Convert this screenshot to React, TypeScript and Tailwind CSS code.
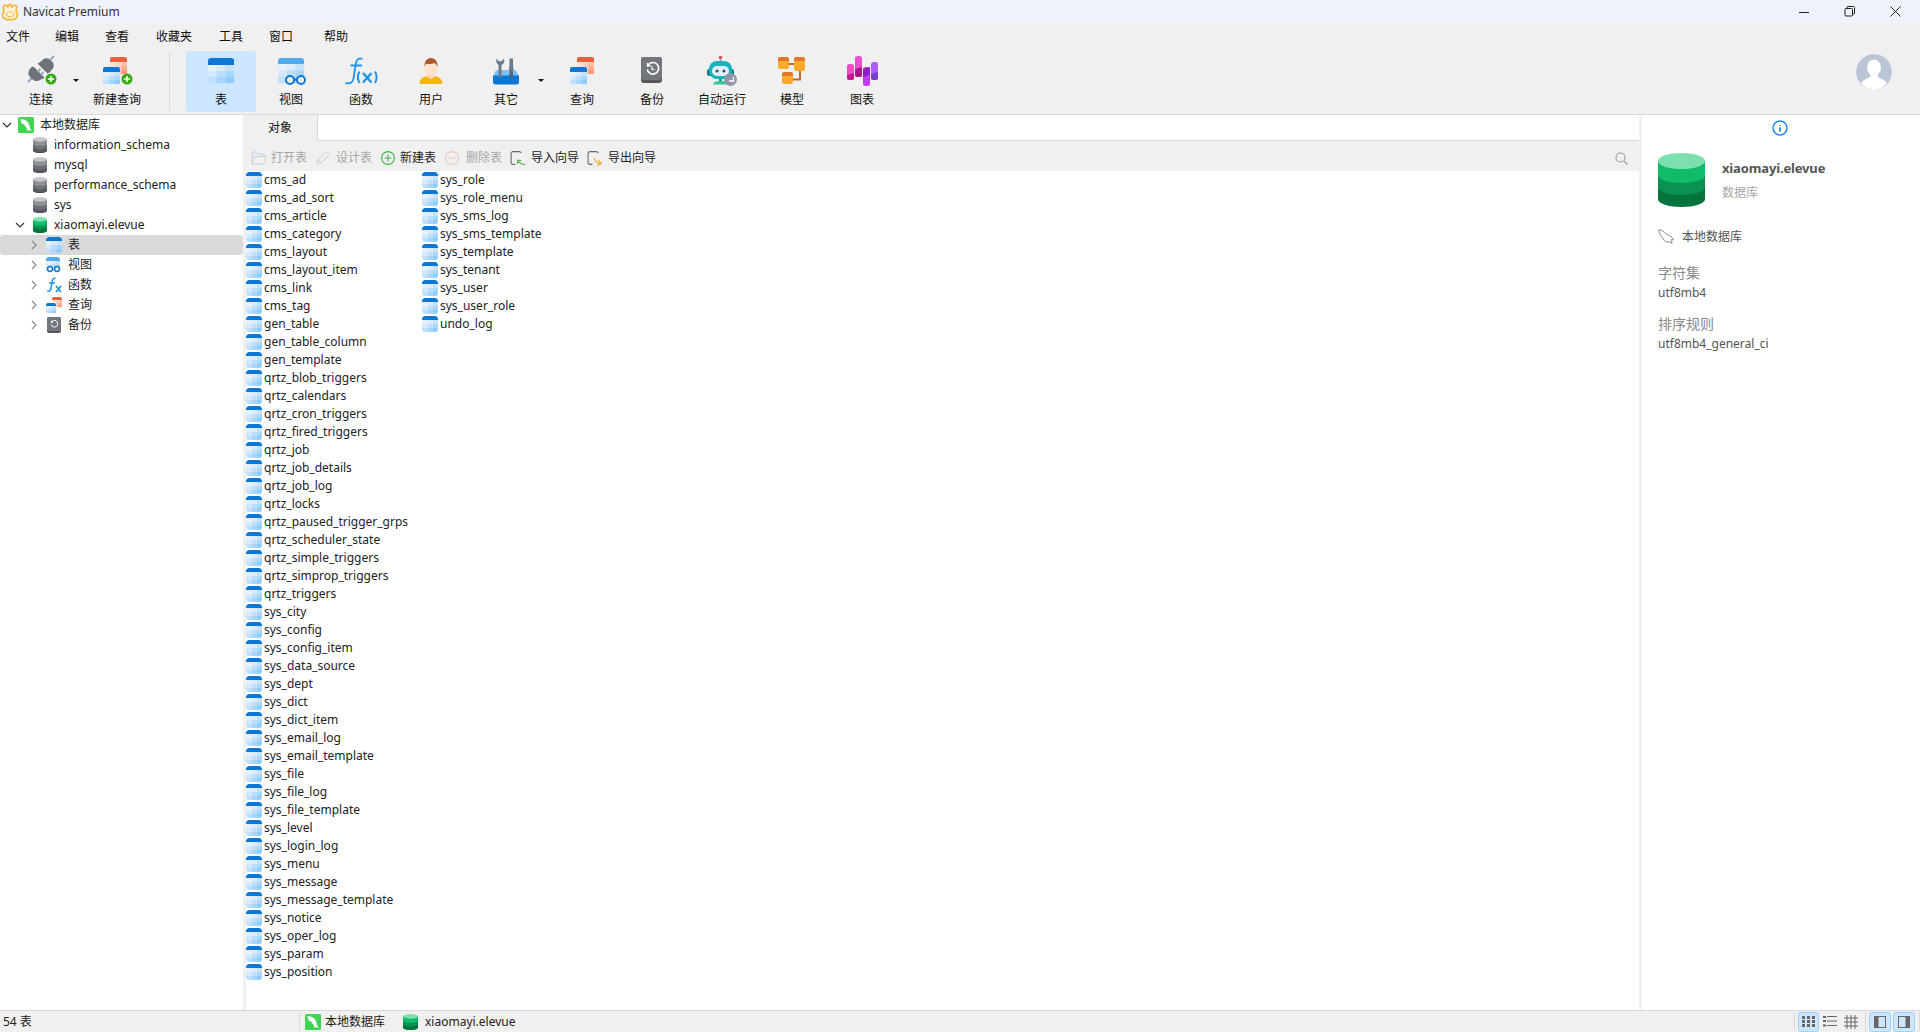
import React from "react";

const col1 = ["cms_ad","cms_ad_sort","cms_article","cms_category","cms_layout","cms_layout_item","cms_link","cms_tag","gen_table","gen_table_column","gen_template","qrtz_blob_triggers","qrtz_calendars","qrtz_cron_triggers","qrtz_fired_triggers","qrtz_job","qrtz_job_details","qrtz_job_log","qrtz_locks","qrtz_paused_trigger_grps","qrtz_scheduler_state","qrtz_simple_triggers","qrtz_simprop_triggers","qrtz_triggers","sys_city","sys_config","sys_config_item","sys_data_source","sys_dept","sys_dict","sys_dict_item","sys_email_log","sys_email_template","sys_file","sys_file_log","sys_file_template","sys_level","sys_login_log","sys_menu","sys_message","sys_message_template","sys_notice","sys_oper_log","sys_param","sys_position"];
const col2 = ["sys_role","sys_role_menu","sys_sms_log","sys_sms_template","sys_template","sys_tenant","sys_user","sys_user_role","undo_log"];

const blues = ["#e6f1fc","#d9ebfc","#c6e2fc","#d4e9fc","#bcdefc","#a9d6fc","#c2e0fd","#a6d5fd","#8fccfd"];
const reds = ["#fde0d6","#fdd2c3","#fcc0ac","#fdd0bf","#fcbda6","#fbab92","#fcc1ab","#fba98f","#fa9a7e"];

function Grid({ x, y, w, h, top, c, head, r = 2 }: { x: number; y: number; w: number; h: number; top: number; c: string[]; head: string; r?: number }) {
  const cw = w / 3;
  const ch = (h - top) / 3;
  return (
    <g>
      {c.map((col, i) => (
        <rect key={i} x={x + (i % 3) * cw} y={y + top + Math.floor(i / 3) * ch} width={cw + 0.1} height={ch + 0.1} fill={col} />
      ))}
      <path d={`M${x} ${y + top}V${y + r}a${r} ${r} 0 0 1 ${r} -${r}H${x + w - r}a${r} ${r} 0 0 1 ${r} ${r}V${y + top}Z`} fill={head} />
    </g>
  );
}

function TableIcon({ s = 16 }: { s?: number }) {
  return (
    <svg width={s} height={s} viewBox="0 0 16 16" className="shrink-0 rounded-[3px]">
      <Grid x={0} y={0} w={16} h={16} top={4} c={blues} head="#0a78d4" r={3} />
    </svg>
  );
}

function Dolphin({ s = 16 }: { s?: number }) {
  return (
    <svg width={s} height={s} viewBox="0 0 16 16" className="shrink-0">
      <rect width="16" height="16" rx="1.5" fill="#3fd54f" />
      <path d="M2 2.500C5 1.800 8 3 10 5.500c1.300 1.700 1.600 3.600 2 5.500l1.800 3.200-3.200-1.400-1 1.700-.6-2.600C8 9.500 6 8 4.800 6.600L3.400 7.200 3.600 5.400 2 2.500Z" fill="#fff" />
    </svg>
  );
}

function DolphinOutline() {
  return (
    <svg width="16" height="16" viewBox="0 0 16 16" fill="none" stroke="#8a8a8a" strokeWidth="1" className="shrink-0">
      <path d="M1 .8C4 1 6.500 3 8 5c1.500.8 3.600 1.600 6 3.400.8.700 1.200 1.600 1.200 2.400l-1.600-.4.4 3.800-3-1.400c-2.500.6-4.300-.2-5-1.800C5 9.600 4 8 2.600 6.200 1.500 4.800.8 2.500 1 .8Z" />
    </svg>
  );
}

function DbIcon({ w = 14, h = 16, color = "green" }: { w?: number; h?: number; color?: "green" | "gray" }) {
  const p = color === "green"
    ? ["#7be0ae", "#10bc69", "#0b9150", "#04733c"]
    : ["#c4c6c9", "#8d9095", "#6e7176", "#55585d"];
  return (
    <svg width={w} height={h} viewBox="0 0 47 54" preserveAspectRatio="none" className="shrink-0">
      <path d="M0 46c0 4.500 10.500 8 23.500 8S47 50.500 47 46V32H0Z" fill={p[3]} />
      <path d="M0 34c0 4.500 10.500 8 23.500 8S47 38.500 47 34V20H0Z" fill={p[2]} />
      <path d="M0 8v14c0 4.500 10.500 8 23.500 8S47 26.500 47 22V8Z" fill={p[1]} />
      <ellipse cx="23.500" cy="8" rx="23.500" ry="8" fill={p[0]} />
    </svg>
  );
}

function PlusBadge({ cx, cy, r }: { cx: number; cy: number; r: number }) {
  return (
    <g>
      <circle cx={cx} cy={cy} r={r} fill="#3aaa12" />
      <path d={`M${cx - r * 0.55} ${cy}H${cx + r * 0.55}M${cx} ${cy - r * 0.55}V${cy + r * 0.55}`} stroke="#fff" strokeWidth="1.6" />
    </g>
  );
}

function Icon34({ children }: { children: React.ReactNode }) {
  return <svg width="34" height="34" viewBox="0 0 34 34" className="shrink-0" fill="none">{children}</svg>;
}

const IconConnect = () => (
  <Icon34>
    <path d="M30 3l-3.500 3.500M4 29l4-4" stroke="#8fa6bf" strokeWidth="2" />
    <path d="M14 11l9.500 9.500a5 5 0 0 0 2-1l3-3.500a6 6 0 0 0 0-7l-2.500-2.500a6 6 0 0 0-7 0l-3.500 3a5 5 0 0 0-2 1.500Z" fill="#6e7279" />
    <path d="M9.500 13.500l11 11a5 5 0 0 1-2.500 1.500l-3 1.500a6 6 0 0 1-6.500-1l-2.500-2.500a6 6 0 0 1-1-6.500l1.500-2.500a5 5 0 0 1 3-1.500Z" fill="#6e7279" />
    <path d="M13.500 19l3-3M16.500 22l3-3" stroke="#8fa6bf" strokeWidth="1.800" />
    <PlusBadge cx={27} cy={26} r={5.500} />
  </Icon34>
);
const IconNewQuery = () => (
  <Icon34>
    <Grid x={10} y={4} w={17} h={17} top={5} c={reds} head="#e9603f" />
    <rect x={2.500} y={13.500} width={18} height={18} rx={2} fill="#f0f0f0" />
    <Grid x={3} y={14} w={17} h={17} top={5} c={blues} head="#0a78d4" />
    <PlusBadge cx={27} cy={26} r={5.500} />
  </Icon34>
);
const IconTable = () => (
  <Icon34>
    <Grid x={4} y={5} w={26} h={25} top={7} c={blues} head="#0a78d4" r={3} />
  </Icon34>
);
const IconView = () => (
  <Icon34>
    <Grid x={4} y={5} w={26} h={25} top={6} c={blues} head="#52abec" r={3} />
    <circle cx={16} cy={27} r={4} fill="#f0f0f0" stroke="#0a78d4" strokeWidth="2" />
    <circle cx={27} cy={27} r={4} fill="#f0f0f0" stroke="#0a78d4" strokeWidth="2" />
    <path d="M20 26.500h3" stroke="#0a78d4" strokeWidth="2" />
  </Icon34>
);
const IconFunc = () => (
  <Icon34>
    <path d="M18.500 6c-3.500-1.400-5.800 0-6.400 3.500L9.500 25.500C9 29.500 6 31 1.500 30M6.500 12.500H18" stroke="#1f93ea" strokeWidth="1.800" />
    <path d="M15.500 18.500c-2 3.500-2 8 0 11.500M31 18.500c2 3.500 2 8 0 11.500" stroke="#1f93ea" strokeWidth="2" />
    <path d="M19 20l8.500 9.500M27.500 20L19 29.500" stroke="#1f93ea" strokeWidth="2.400" />
  </Icon34>
);
const IconUser = () => (
  <Icon34>
    <path d="M5.500 31c0-5 3-6.500 7-8l4.500 2.500 4.500-2.500c4 1.500 7 3 7 8Z" fill="#fbb40b" />
    <path d="M13.500 20h7v4l-3.500 2.500-3.500-2.500Z" fill="#f7d9bd" />
    <ellipse cx={17} cy={15} rx={6.500} ry={7.500} fill="#fbe3cc" />
    <path d="M10.500 14c-.5-6 3-9 6.500-9s7 3 6.500 9c-1-2.500-2-3.500-3.500-4-2 1.200-6 1.500-7.500.6-1 .8-1.600 2-2 3.400Z" fill="#a85a28" />
  </Icon34>
);
const IconOther = () => (
  <Icon34>
    <path d="M4 24l2-5a3 3 0 0 1 3-2h16a3 3 0 0 1 3 2l2 5Z" fill="#7cc0f5" />
    <path d="M4 22.500h26V29a2.500 2.500 0 0 1-2.500 2.500h-21A2.500 2.500 0 0 1 4 29Z" fill="#0a78d4" />
    <path d="M9.500 12v12h3V12c1.800-.8 2.800-2.400 2.800-4.200 0-.8-.2-1.500-.5-2.100l-2 2.500h-3.100l-2-2.500c-.3.600-.5 1.300-.5 2.100 0 1.800 1 3.400 2.800 4.200Z" fill="#6a7a8c" />
    <path d="M20.500 11V5.500h3.500V11l.6 7h-4.700Z" fill="#6a7a8c" />
    <path d="M20 24l.900-6h2.700l.900 6Z" fill="#566373" />
  </Icon34>
);
const IconQuery = () => (
  <Icon34>
    <Grid x={12} y={4} w={17} h={17} top={5} c={reds} head="#e9603f" />
    <rect x={4.500} y={13.500} width={18} height={18} rx={2} fill="#f0f0f0" />
    <Grid x={5} y={14} w={17} h={17} top={5} c={blues} head="#0a78d4" />
  </Icon34>
);
const IconBackup = () => (
  <Icon34>
    <rect x={6} y={4} width={21} height={26} rx={3} fill="#55585d" />
    <rect x={6} y={4} width={21} height={23} rx={3} fill="#73767c" />
    <path d="M13.500 11.500a5.800 5.800 0 1 1-1.300 5" stroke="#fff" strokeWidth="1.600" />
    <path d="M11.500 9.500l.6 4.600 4.300-1Z" fill="#fff" />
    <path d="M17 13v3.500h2.500" stroke="#fff" strokeWidth="1.100" />
  </Icon34>
);
const IconRobot = () => (
  <Icon34>
    <circle cx={15.500} cy={4.500} r={1.800} fill="#f0455a" />
    <path d="M15.500 5v4" stroke="#7f8f9f" strokeWidth="1.200" />
    <path d="M4 16h2v7H4a2 2 0 0 1-2-2v-3a2 2 0 0 1 2-2ZM25 16h2a2 2 0 0 1 2 2v3a2 2 0 0 1-2 2h-2Z" fill="#0f7d7c" />
    <rect x={4} y={8} width={23} height={18} rx={8} fill="#1bb3bb" />
    <rect x={7} y={13} width={17} height={10} rx={5} fill="#e2f0fa" />
    <circle cx={12} cy={18} r={1.500} fill="#264b7c" />
    <circle cx={19} cy={18} r={1.500} fill="#264b7c" />
    <path d="M15.500 26v3" stroke="#1e9d84" strokeWidth="3" />
    <path d="M8 31.500c0-2.500 3-3.500 7.500-3.500s7.500 1 7.500 3.500Z" fill="#3ac393" />
    <circle cx={25.500} cy={26.500} r={6.500} fill="#8f98a5" />
    <path d="M28.500 24v4h-4.500" stroke="#fff" strokeWidth="1.300" />
  </Icon34>
);
const IconModel = () => (
  <Icon34>
    <path d="M13 11h7M25 17v9.500h-8" stroke="#c46a28" strokeWidth="2" />
    {[[3, 4, 11, 12], [19, 4, 11, 14], [7, 19, 11, 12]].map(([x, y, w, h], i) => (
      <g key={i}>
        <rect x={x} y={y} width={w} height={h} rx={2.500} fill="#fdaa28" />
        <path d={`M${x} ${y + 4}V${y + 2.500}a2.500 2.500 0 0 1 2.500 -2.500h${w - 5}a2.500 2.500 0 0 1 2.500 2.500V${y + 4}Z`} fill="#e1772a" />
      </g>
    ))}
  </Icon34>
);
const IconChart = () => (
  <Icon34>
    {[
      { x: 2, y: 11, h: 16, a: "#ec4fc4", d: "#c41b8c", ds: 9 },
      { x: 10, y: 3, h: 21, a: "#ea4fd0", d: "#a8168c", ds: 11 },
      { x: 18, y: 14, h: 19, a: "#c23bef", d: "#8f1fc0", ds: 0 },
      { x: 26, y: 9, h: 18, a: "#a95cff", d: "#7a3bcc", ds: 10 },
    ].map((c, i) => (
      <g key={i}>
        <rect x={c.x} y={c.y} width="7" height={c.h} rx="2.500" fill={c.a} />
        <path d={`M${c.x} ${c.y + c.ds + 2}l7 -2V${i === 2 ? c.y + 8 : c.y + c.h - 2.500}${i === 2 ? "l-7 2Z" : "a2.500 2.500 0 0 1 -2.500 2.500h-2a2.500 2.500 0 0 1 -2.500 -2.500Z"}`} fill={c.d} />
      </g>
    ))}
  </Icon34>
);

function ToolBtn({ label, icon, active, ml = "" }: { label: string; icon: React.ReactNode; active?: boolean; ml?: string }) {
  return (
    <div className={`w-[70px] h-[61px] flex flex-col items-center pt-[2px] rounded-[2px] ${ml} ${active ? "bg-[#cce6ff]" : ""}`}>
      {icon}
      <span className="mt-[5px] h-[16px] leading-[16px] text-[12px] text-[#111]">{label}</span>
    </div>
  );
}

function Caret() {
  return (
    <div className="w-[6px] h-[61px] flex items-start pt-[28px] justify-start shrink-0">
      <span className="block w-0 h-0 border-l-[3px] border-r-[3px] border-t-[3px] border-l-transparent border-r-transparent border-t-[#111] -ml-[3px]" />
    </div>
  );
}

function Chevron({ down }: { down?: boolean }) {
  return (
    <svg width="10" height="10" viewBox="0 0 10 10" fill="none" stroke={down ? "#333" : "#8a8a8a"} strokeWidth="1.200" className="shrink-0">
      {down ? <path d="M1 3l4 4 4-4" /> : <path d="M3 1l4 4-4 4" />}
    </svg>
  );
}

function TreeRow({ pl, chev, icon, label, selected, iconMl = "ml-[7px]" }: { pl: string; chev?: "down" | "right"; icon: React.ReactNode; label: string; selected?: boolean; iconMl?: string }) {
  return (
    <div className={`h-[20px] flex items-center ${pl} ${selected ? "bg-[#d9d9d9] rounded-[3px]" : ""}`}>
      <div className="w-[10px] shrink-0 flex justify-center">
        {chev && <Chevron down={chev === "down"} />}
      </div>
      <div className={`${iconMl} w-[16px] flex justify-center shrink-0`}>{icon}</div>
      <span className="ml-[6px] text-[12px] text-[#222]">{label}</span>
    </div>
  );
}

const SmallView = () => (
  <svg width="16" height="16" viewBox="0 0 16 16" className="shrink-0">
    <Grid x={0} y={0} w={14} h={14} top={4} c={blues} head="#52abec" r={3} />
    <circle cx={4} cy={12} r={2.400} fill="#fff" stroke="#0a78d4" strokeWidth="1.500" />
    <circle cx={11} cy={12} r={2.400} fill="#fff" stroke="#0a78d4" strokeWidth="1.500" />
  </svg>
);
const SmallFunc = () => (
  <svg width="16" height="16" viewBox="0 0 16 16" fill="none" stroke="#1f93ea" className="shrink-0">
    <path d="M9.500 1.500C7.500 1 6.700 1.800 6.300 4L4.800 12c-.3 1.800-1.500 2.500-3.500 2M3 6h6" strokeWidth="1.500" />
    <path d="M10 9l5 6M15 9l-5 6" strokeWidth="1.800" />
  </svg>
);
const SmallQuery = () => (
  <svg width="16" height="16" viewBox="0 0 16 16" className="shrink-0">
    <Grid x={6} y={0} w={10} h={10} top={3} c={reds} head="#e9603f" />
    <rect x={-0.500} y={5.500} width={11} height={11} rx={1} fill="#fff" />
    <Grid x={0} y={6} w={10} h={10} top={3} c={blues} head="#0a78d4" />
  </svg>
);
const SmallBackup = () => (
  <svg width="14" height="16" viewBox="0 0 14 16" fill="none" className="shrink-0">
    <rect width="14" height="16" rx="2" fill="#55585d" />
    <rect width="14" height="14" rx="2" fill="#73767c" />
    <path d="M5 4.500a3.300 3.300 0 1 1-.8 3" stroke="#fff" strokeWidth="1" />
    <path d="M3.800 3.500l.3 2.500 2.400-.6Z" fill="#fff" />
  </svg>
);

function ActionBtn({ icon, label, disabled, ml, gap }: { icon: React.ReactNode; label: string; disabled?: boolean; ml: string; gap: string }) {
  return (
    <div className={`flex items-center ${ml}`}>
      {icon}
      <span className={`${gap} text-[12px] ${disabled ? "text-[#a6a6a6]" : "text-[#222]"}`}>{label}</span>
    </div>
  );
}

function StatusBtn({ active, wide, children }: { active?: boolean; wide?: boolean; children: React.ReactNode }) {
  return (
    <div className={`${wide ? "w-[22px]" : "w-[21px]"} h-[20px] flex items-center justify-center rounded-[3px] ${active ? "bg-[#cce6ff] border border-[#99d1ff]" : ""}`}>
      {children}
    </div>
  );
}

const menus: [string, string][] = [
  ["文件", "ml-[6px]"], ["编辑", "ml-[25px]"], ["查看", "ml-[26px]"], ["收藏夹", "ml-[27px]"], ["工具", "ml-[27px]"], ["窗口", "ml-[26px]"], ["帮助", "ml-[31px]"],
];

function ListRow({ name }: { name: string }) {
  return (
    <div className="h-[18px] flex items-center">
      <TableIcon />
      <span className="ml-[2px] text-[12px] text-[#222] whitespace-nowrap">{name}</span>
    </div>
  );
}

export default function App() {
  return (
    <div className="w-[1920px] h-[1032px] flex flex-col overflow-hidden bg-white text-[12px]" style={{ fontFamily: '"Noto Sans", "Noto Sans CJK SC", sans-serif' }}>
      {/* Title bar */}
      <div className="h-[23px] shrink-0 bg-[#eef2fa] flex items-center">
        <svg width="18" height="18" viewBox="0 0 17 17" fill="#fdf3d8" stroke="#f0bd4a" strokeWidth="1.800" className="ml-[1px] shrink-0">
          <path d="M8.500 15.800c-3.500.3-7-1-7-4.300 0-1.700.9-2.700 1.300-3.900C2.300 6 1.300 3.800 2.800 2.500c1.700-1.300 3.500.3 3.900 1.800.3-1.900 1-3 1.800-3s1.500 1.100 1.800 3c.4-1.500 2.200-3.100 3.900-1.800 1.500 1.300.5 3.500 0 5.100.4 1.200 1.300 2.200 1.300 3.900 0 3.300-3.500 4.600-7 4.300Z" />
          <path d="M5.200 10c1-2 5.600-2 6.600 0 .6 1.700-1.300 3-3.300 3s-3.900-1.300-3.300-3Z" strokeWidth="1" />
        </svg>
        <span className="ml-[4px] text-[12px] text-[#333]">Navicat Premium</span>
        <div className="ml-auto flex items-center">
          <svg width="10" height="10" viewBox="0 0 10 10" stroke="#222" fill="none"><path d="M0 5.500h10" /></svg>
          <svg width="11" height="11" viewBox="0 0 11 11" stroke="#222" fill="none" className="ml-[35px]"><rect x="1" y="2.500" width="7.500" height="7.500" rx="1" /><path d="M3 2.500V1.500a1 1 0 0 1 1-1h5.500a1 1 0 0 1 1 1V7a1 1 0 0 1-1 1h-1" /></svg>
          <svg width="11" height="11" viewBox="0 0 11 11" stroke="#222" fill="none" className="ml-[35px] mr-[19px]"><path d="M.5.500l10 10M10.500.500l-10 10" /></svg>
        </div>
      </div>
      {/* Menu */}
      <div className="h-[27px] shrink-0 bg-[#f0f0f0] flex items-center">
        {menus.map(([m, c]) => (
          <span key={m} className={`${c} text-[12px] text-[#111]`}>{m}</span>
        ))}
      </div>
      {/* Toolbar */}
      <div className="h-[65px] shrink-0 bg-[#f0f0f0] border-b border-[#d9d9d9] flex items-start pt-[1px] pl-[6px]">
        <ToolBtn label="连接" icon={<IconConnect />} />
        <Caret />
        <ToolBtn label="新建查询" icon={<IconNewQuery />} />
        <div className="w-[1px] h-[59px] mt-[1px] ml-[17px] mr-[16px] bg-[#d9d9d9]" />
        <ToolBtn label="表" active icon={<IconTable />} />
        <ToolBtn label="视图" icon={<IconView />} />
        <ToolBtn label="函数" icon={<IconFunc />} />
        <ToolBtn label="用户" icon={<IconUser />} />
        <ToolBtn label="其它" ml="ml-[5px]" icon={<IconOther />} />
        <Caret />
        <ToolBtn label="查询" icon={<IconQuery />} />
        <ToolBtn label="备份" icon={<IconBackup />} />
        <ToolBtn label="自动运行" icon={<IconRobot />} />
        <ToolBtn label="模型" icon={<IconModel />} />
        <ToolBtn label="图表" icon={<IconChart />} />
        <svg width="36" height="36" viewBox="0 0 36 36" className="ml-auto mr-[28px] mt-[3px] rounded-full">
          <circle cx="18" cy="18" r="18" fill="#bcc5d6" />
          <ellipse cx="18" cy="13.500" rx="7" ry="8" fill="#fff" />
          <path d="M14.500 20h7l.5 3c3 1.500 7 3 9 6-3 4-8 7-13 7s-10-3-13-7c2-3 6-4.500 9-6Z" fill="#fff" />
        </svg>
      </div>
      {/* Body */}
      <div className="flex-1 min-h-0 flex">
        {/* Tree */}
        <div className="w-[243px] shrink-0">
          <TreeRow pl="pl-[2px]" iconMl="ml-[6px]" chev="down" icon={<Dolphin />} label="本地数据库" />
          {["information_schema", "mysql", "performance_schema", "sys"].map((n) => (
            <TreeRow key={n} pl="pl-[15px]" icon={<DbIcon color="gray" />} label={n} />
          ))}
          <TreeRow pl="pl-[15px]" chev="down" icon={<DbIcon />} label="xiaomayi.elevue" />
          <TreeRow pl="pl-[29px]" chev="right" icon={<TableIcon />} label="表" selected />
          <TreeRow pl="pl-[29px]" chev="right" icon={<SmallView />} label="视图" />
          <TreeRow pl="pl-[29px]" chev="right" icon={<SmallFunc />} label="函数" />
          <TreeRow pl="pl-[29px]" chev="right" icon={<SmallQuery />} label="查询" />
          <TreeRow pl="pl-[29px]" chev="right" icon={<SmallBackup />} label="备份" />
        </div>
        {/* Center */}
        <div className="flex-1 min-w-0 flex flex-col border-l-[3px] border-[#f0f0f0]">
          <div className="h-[26px] shrink-0 flex -ml-[3px]">
            <div className="w-[74px] bg-[#f0f0f0] flex items-center justify-center text-[12px] text-[#111]">对象</div>
            <div className="flex-1 border-l border-b border-[#d9d9d9]" />
          </div>
          <div className="h-[30px] shrink-0 bg-[#f0f0f0] flex items-center pt-[4px] -ml-[3px]">
            <ActionBtn ml="ml-[8px]" gap="ml-[4px]" disabled label="打开表" icon={
              <svg width="16" height="14" viewBox="0 0 16 14" fill="none" stroke="#c5d0da"><path d="M1 12.500V2a1 1 0 0 1 1-1h3.500l1.500 2h6v2.500M1 12.500l2.500-7H15l-2.500 7.500H1Z" /></svg>
            } />
            <ActionBtn ml="ml-[8px]" gap="ml-[5px]" disabled label="设计表" icon={
              <svg width="16" height="16" viewBox="0 0 16 16" fill="none" stroke="#c5d0da"><path d="M2 14l1-4L11.500 1.500l3 3L6 13ZM3 10l3 3" /></svg>
            } />
            <ActionBtn ml="ml-[9px]" gap="ml-[5px]" label="新建表" icon={
              <svg width="14" height="14" viewBox="0 0 14 14" fill="none" stroke="#3bb54a" strokeWidth="1.100"><circle cx="7" cy="7" r="6.400" /><path d="M3.500 7h7M7 3.500v7" /></svg>
            } />
            <ActionBtn ml="ml-[9px]" gap="ml-[7px]" disabled label="删除表" icon={
              <svg width="14" height="14" viewBox="0 0 14 14" fill="none" stroke="#f0c8c2" strokeWidth="1.100"><circle cx="7" cy="7" r="6.400" /><path d="M3.500 7h7" /></svg>
            } />
            <ActionBtn ml="ml-[8px]" gap="ml-[5px]" label="导入向导" icon={
              <svg width="16" height="16" viewBox="0 0 15 15" fill="none"><path d="M5 13.500H3a2 2 0 0 1-2-2v-8a2 2 0 0 1 2-2h5.500a2 2 0 0 1 2 1.500" stroke="#666" /><path d="M14 13.500c-2.500 0-5-.5-6.500-3.500M7 13l.3-3.500L10.500 10" stroke="#4aae4a" /></svg>
            } />
            <ActionBtn ml="ml-[8px]" gap="ml-[5px]" label="导出向导" icon={
              <svg width="16" height="16" viewBox="0 0 15 15" fill="none"><path d="M5 13.500H3a2 2 0 0 1-2-2v-8a2 2 0 0 1 2-2h5.500a2 2 0 0 1 2 1.500" stroke="#666" /><path d="M7 7c0 3.500 2.500 5.500 6 5.500M10.500 9.500l3 3-3.500 2" stroke="#f5a623" /></svg>
            } />
            <svg width="13" height="13" viewBox="0 0 13 13" fill="none" stroke="#999" strokeWidth="1.100" className="ml-auto mr-[11px]"><circle cx="5.500" cy="5.500" r="4.500" /><path d="M9 9l3.500 3.500" /></svg>
          </div>
          <div className="flex-1 min-h-0 flex items-start">
            <div className="w-[176px] shrink-0">
              {col1.map((n) => <ListRow key={n} name={n} />)}
            </div>
            <div>
              {col2.map((n) => <ListRow key={n} name={n} />)}
            </div>
          </div>
        </div>
        {/* Right */}
        <div className="w-[281px] shrink-0 border-l-[3px] border-[#f0f0f0] flex flex-col">
          <div className="h-[25px] flex items-center justify-center shrink-0 pr-[3px]">
            <svg width="16" height="16" viewBox="0 0 16 16" fill="none">
              <circle cx="8" cy="8" r="7" stroke="#1e88f0" strokeWidth="1.500" />
              <path d="M8 4.800v1M8 7.200v4.300" stroke="#1e88f0" strokeWidth="1.800" />
            </svg>
          </div>
          <div className="ml-[16px] mt-[13px] flex">
            <DbIcon w={47} h={54} />
            <div className="ml-[17px] flex flex-col">
              <span className="mt-[5px] h-[20px] leading-[20px] text-[13px] font-bold text-[#555] tracking-[-0.15px]">xiaomayi.elevue</span>
              <span className="mt-[5px] h-[20px] leading-[20px] text-[12px] text-[#a6a6a6]">数据库</span>
            </div>
          </div>
          <div className="ml-[16px] mt-[22px] h-[16px] flex items-center">
            <DolphinOutline />
            <span className="ml-[8px] text-[12px] text-[#555]">本地数据库</span>
          </div>
          <div className="ml-[16px] mt-[18px] h-[20px] leading-[20px] text-[14px] text-[#8a8a8a]">字符集</div>
          <div className="ml-[16px] h-[20px] leading-[20px] text-[12px] text-[#555]">utf8mb4</div>
          <div className="ml-[16px] mt-[11px] h-[20px] leading-[20px] text-[14px] text-[#8a8a8a]">排序规则</div>
          <div className="ml-[16px] h-[20px] leading-[20px] text-[12px] text-[#555]">utf8mb4_general_ci</div>
        </div>
      </div>
      {/* Status bar */}
      <div className="h-[22px] shrink-0 bg-[#f0f0f0] border-t border-[#d9d9d9] flex items-center">
        <span className="ml-[3px] w-[296px] text-[12px] text-[#222]">54 表</span>
        <div className="w-[1px] h-[19px] bg-[#d9d9d9]" />
        <div className="ml-[5px]"><Dolphin /></div>
        <span className="ml-[4px] w-[78px] text-[12px] text-[#222]">本地数据库</span>
        <DbIcon w={15} h={16} />
        <span className="ml-[7px] text-[12px] text-[#222]">xiaomayi.elevue</span>
        <div className="ml-auto flex items-center">
          <div className="w-[1px] h-[19px] bg-[#d9d9d9] mr-[3px]" />
          <StatusBtn active>
            <svg width="13" height="11" viewBox="0 0 13 11" fill="#666"><rect x="0" y="0" width="3" height="3" /><rect x="5" y="0" width="3" height="3" /><rect x="10" y="0" width="3" height="3" /><rect x="0" y="4" width="3" height="3" /><rect x="5" y="4" width="3" height="3" /><rect x="10" y="4" width="3" height="3" /><rect x="0" y="8" width="3" height="3" /><rect x="5" y="8" width="3" height="3" /><rect x="10" y="8" width="3" height="3" /></svg>
          </StatusBtn>
          <StatusBtn>
            <svg width="14" height="11" viewBox="0 0 14 11" fill="#666"><rect y="0" width="3" height="2" /><rect x="4" y="0" width="10" height="1" /><rect y="4" width="3" height="2" /><rect x="4" y="4.500" width="10" height="1" /><rect y="8.500" width="3" height="2" /><rect x="4" y="9" width="10" height="1" /></svg>
          </StatusBtn>
          <StatusBtn>
            <svg width="14" height="14" viewBox="0 0 14 14" stroke="#666" fill="none"><path d="M3 0v14M7 0v14M11 0v14M0 3h14M0 7h14M0 11h14" /></svg>
          </StatusBtn>
          <div className="w-[1px] h-[19px] bg-[#d9d9d9] ml-[4px] mr-[3px]" />
          <StatusBtn active wide>
            <svg width="12" height="12" viewBox="0 0 12 12" fill="none" stroke="#666"><rect x=".5" y=".5" width="11" height="11" /><rect x="1" y="1" width="3" height="10" fill="#666" /></svg>
          </StatusBtn>
          <div className="ml-[2px]">
            <StatusBtn active wide>
              <svg width="12" height="12" viewBox="0 0 12 12" fill="none" stroke="#666"><rect x=".5" y=".5" width="11" height="11" /><rect x="8" y="1" width="3" height="10" fill="#666" /></svg>
            </StatusBtn>
          </div>
          <div className="w-[1px] h-[19px] bg-[#d9d9d9] ml-[4px]" />
        </div>
      </div>
    </div>
  );
}
